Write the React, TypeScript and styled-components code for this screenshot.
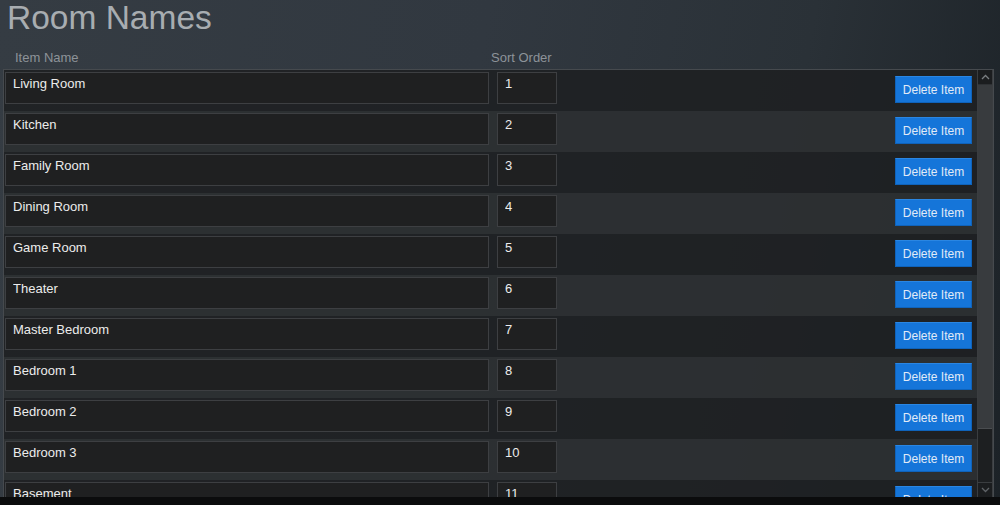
import React from "react";
import styled, { createGlobalStyle } from "styled-components";

const GlobalStyle = createGlobalStyle`
    html, body {
        margin: 0;
        padding: 0;
        background: #0c0d0e;
    }
    * {
        box-sizing: border-box;
    }
`;

const rooms = [
    "Living Room",
    "Kitchen",
    "Family Room",
    "Dining Room",
    "Game Room",
    "Theater",
    "Master Bedroom",
    "Bedroom 1",
    "Bedroom 2",
    "Bedroom 3",
    "Basement",
];

export default function App() {
    return (
        <Page>
            <GlobalStyle />
            <Title>Room Names</Title>
            <HeaderRow>
                <HeaderCell>Item Name</HeaderCell>
                <HeaderCell>Sort Order</HeaderCell>
            </HeaderRow>
            <Frame>
                <List>
                    {rooms.map((name, i) => (
                        <Row key={name} $odd={i % 2 === 0}>
                            <Field readOnly defaultValue={name} $wide />
                            <Field readOnly defaultValue={String(i + 1)} />
                            <DeleteBtn>Delete Item</DeleteBtn>
                        </Row>
                    ))}
                </List>
                <Scrollbar>
                    <ArrowBtn>
                        <svg width="9" height="6" viewBox="0 0 9 6">
                            <path
                                d="M1 5 L4.5 1.5 L8 5"
                                stroke="#7a7e82"
                                strokeWidth="1.3"
                                fill="none"
                            />
                        </svg>
                    </ArrowBtn>
                    <Track>
                        <Thumb />
                    </Track>
                    <ArrowBtn>
                        <svg width="9" height="6" viewBox="0 0 9 6">
                            <path
                                d="M1 1 L4.5 4.5 L8 1"
                                stroke="#5f6367"
                                strokeWidth="1.3"
                                fill="none"
                            />
                        </svg>
                    </ArrowBtn>
                </Scrollbar>
            </Frame>
            <Footer />
        </Page>
    );
}

const Page = styled.div`
    display: flex;
    flex-direction: column;
    width: 1000px;
    height: 505px;
    overflow: hidden;
    background: linear-gradient(
        100deg,
        #353c43 0%,
        #313840 45%,
        #2a3137 75%,
        #1c2227 100%
    );
    font-family: "Liberation Sans", Arial, sans-serif;
`;

const Title = styled.h1`
    margin: 0;
    padding: 0 0 0 7px;
    height: 40px;
    line-height: 36px;
    font-size: 33.5px;
    font-weight: normal;
    color: #a8adb1;
`;

const HeaderRow = styled.div`
    display: grid;
    grid-template-columns: 476px auto;
    height: 29px;
    padding-left: 15px;
    align-items: center;
`;

const HeaderCell = styled.div`
    font-size: 13px;
    color: #8d9399;
    padding-top: 6px;
`;

const Frame = styled.div`
    display: flex;
    flex: none;
    height: 428px;
    margin-left: 3px;
    width: 991px;
    border: 1px solid #464a4e;
    border-bottom: none;
`;

const List = styled.div`
    flex: 1;
    overflow: hidden;
`;

const Row = styled.div<{ $odd: boolean }>`
    display: flex;
    align-items: flex-start;
    gap: 8px;
    height: 41px;
    padding: 2px 5px 0 1px;
    background: ${(p) => (p.$odd ? "rgba(30, 32, 34, 0.9)" : "rgba(44, 47, 49, 0.95)")};
`;

const Field = styled.input<{ $wide?: boolean }>`
    width: ${(p) => (p.$wide ? "484px" : "60px")};
    height: 32px;
    padding: 3px 7px 13px 7px;
    border: 1px solid #3d3f42;
    background: #1f2021;
    color: #ececec;
    font-family: "Liberation Sans", Arial, sans-serif;
    font-size: 13px;
    outline: none;
`;

const DeleteBtn = styled.button`
    margin-left: auto;
    margin-top: 4px;
    width: 77px;
    height: 27px;
    padding: 0;
    border: 1px solid #0f63bb;
    border-top-color: #2a86e2;
    background: #1575d9;
    color: #e1ebf7;
    font-family: "Liberation Sans", Arial, sans-serif;
    font-size: 12px;
    cursor: pointer;
`;

const Scrollbar = styled.div`
    display: flex;
    flex-direction: column;
    width: 16px;
    border-left: 1px solid #3a3d40;
    border-right: 1px solid #3a3d40;
    background: #1d1f21;
`;

const ArrowBtn = styled.div`
    display: flex;
    align-items: center;
    justify-content: center;
    height: 15px;
    background: #1b1d1f;
    border-bottom: 1px solid #2e3134;
    &:last-child {
        border-bottom: none;
        border-top: 1px solid #3a3d40;
    }
`;

const Track = styled.div`
    flex: 1;
    display: flex;
    flex-direction: column;
`;

const Thumb = styled.div`
    height: 344px;
    background: #383b3e;
    border-bottom: 1px solid #4a4d50;
`;

const Footer = styled.div`
    flex: 1;
    background: #0b0c0d;
`;
